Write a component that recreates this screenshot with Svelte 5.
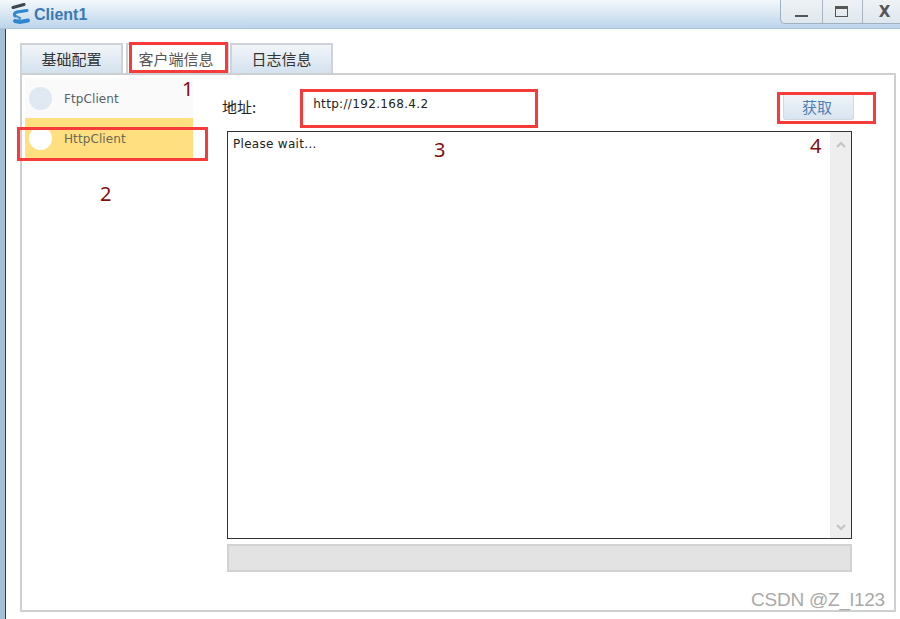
<script>
  const tabs = [
    { label: '基础配置', active: false },
    { label: '客户端信息', active: true },
    { label: '日志信息', active: false }
  ];
  const clients = [
    { name: 'FtpClient', active: false },
    { name: 'HttpClient', active: true }
  ];
  // red callouts drawn on top of the screenshot: [left, top, width, height]
  const callouts = [
    [129, 42, 99, 31],
    [17, 127, 191, 34],
    [300, 89, 238, 39],
    [777, 92, 99, 32]
  ];
  const marks = [
    ['1', 182, 77],
    ['2', 100, 182],
    ['3', 434, 138],
    ['4', 810, 134]
  ];
</script>

<div class="window">
  <header class="titlebar">
    <svg class="logo" width="20" height="24" viewBox="0 0 20 24">
      <path d="M2 4.5 L13 1.5" stroke="#3c4650" stroke-width="3" stroke-linecap="round" />
      <path d="M16 7.5 L6 9 Q2 10.5 4 13" fill="none" stroke="#2f86d0" stroke-width="3" stroke-linecap="round" />
      <path d="M4 18 L9 19 L17 17.5" fill="none" stroke="#2f86d0" stroke-width="4" stroke-linecap="round" />
      <path d="M5 13 L9 15 L8 18" fill="none" stroke="#4a90c8" stroke-width="2" />
    </svg>
    <span class="title">Client1</span>
    <div class="controls">
      <button class="ctl"><span class="min"></span></button>
      <button class="ctl"><span class="max"></span></button>
      <button class="ctl close">X</button>
    </div>
  </header>

  <div class="body">
    <nav class="tabs">
      {#each tabs as tab}
        <div class="tab" class:active={tab.active}>{tab.label}</div>
      {/each}
    </nav>

    <section class="panel">
      <aside class="sidebar">
        {#each clients as client}
          <div class="client" class:active={client.active}>
            <span class="dot"></span>
            <span class="name">{client.name}</span>
          </div>
        {/each}
      </aside>

      <div class="main">
        <div class="toolbar">
          <span class="label">地址:</span>
          <span class="url">http://192.168.4.2</span>
          <button class="fetch">获取</button>
        </div>
        <div class="output">
          <div class="log">Please wait...</div>
          <div class="scroll">
            <svg width="12" height="8" viewBox="0 0 12 8"><path d="M2 6 L6 2 L10 6" fill="none" stroke="#c4c4c4" stroke-width="2" /></svg>
            <svg width="12" height="8" viewBox="0 0 12 8"><path d="M2 2 L6 6 L10 2" fill="none" stroke="#c4c4c4" stroke-width="2" /></svg>
          </div>
        </div>
        <div class="progress"></div>
      </div>
    </section>
  </div>

  {#each callouts as c}
    <div class="callout" style="left:{c[0]}px;top:{c[1]}px;width:{c[2]}px;height:{c[3]}px"></div>
  {/each}
  {#each marks as m}
    <span class="mark" style="left:{m[1]}px;top:{m[2]}px">{m[0]}</span>
  {/each}
  <span class="watermark">CSDN @Z_l123</span>
</div>

<style>
  :global(body) {
    margin: 0;
    background: #fff;
  }

  .window {
    position: relative;
    width: 900px;
    height: 619px;
    overflow: hidden;
    display: flex;
    flex-direction: column;
    font-family: "DejaVu Sans", "Noto Sans CJK SC", sans-serif;
    font-size: 12px;
    color: #222;
    background: #a4c0d8;
  }

  .titlebar {
    height: 29px;
    flex: none;
    display: flex;
    align-items: flex-start;
    padding-left: 11px;
    box-sizing: border-box;
    background: linear-gradient(#f4f8fb, #bcd5ea);
    border-bottom: 1px solid #a9c3da;
  }

  .logo {
    margin-top: 3px;
  }

  .title {
    margin: 6px 0 0 3px;
    font: bold 16px "Liberation Sans", sans-serif;
    color: #3b78b5;
  }

  .controls {
    margin-left: auto;
    width: 120px;
    height: 24px;
    display: flex;
    box-sizing: border-box;
    border: 1px solid #9fb0be;
    border-top: none;
    border-right: none;
    border-bottom-left-radius: 5px;
    background: linear-gradient(#eef2f5, #dfe7ee);
  }

  .ctl {
    width: 40px;
    flex: none;
    padding: 0;
    border: none;
    border-left: 1px solid #a9b6c1;
    background: none;
    display: flex;
    align-items: center;
    justify-content: center;
  }

  .ctl:first-child {
    width: 41px;
    border-left: none;
  }

  .min {
    width: 13px;
    height: 2px;
    margin-top: 8px;
    background: #555;
  }

  .max {
    width: 11px;
    height: 7px;
    margin-right: 2px;
    border: 1.5px solid #555;
    border-top-width: 3px;
  }

  .close {
    padding-left: 4px;
    font: bold 15px "DejaVu Sans", sans-serif;
    color: #555;
  }

  .body {
    flex: 1;
    display: flex;
    flex-direction: column;
    box-sizing: border-box;
    margin-left: 5px;
    padding: 14px 4px 7px 14px;
    border-left: 1px solid #3a3a3a;
    background: #fff;
  }

  .tabs {
    display: flex;
    height: 31px;
    flex: none;
  }

  .tab {
    width: 103px;
    height: 31px;
    box-sizing: border-box;
    border: 2px solid #cdd3d8;
    border-bottom: none;
    background: linear-gradient(#f1f5f9, #d3e1ee);
    font: 15px "Noto Sans CJK SC", sans-serif;
    color: #333;
    text-align: center;
    line-height: 28px;
  }

  .tab.active {
    margin: 0 1px 0 3px;
    padding-right: 3px;
    background: #fff;
    color: #555;
  }

  .panel {
    flex: 1;
    display: flex;
    box-sizing: border-box;
    border: 2px solid #cdcfd1;
    margin-top: -1px;
    padding: 3px 0 0 3px;
    background: #fff;
    position: relative;
  }

  .sidebar {
    width: 168px;
    flex: none;
    font-size: 12px;
    color: #55616d;
  }

  .client {
    height: 40px;
    display: flex;
    align-items: center;
    gap: 12px;
    padding-left: 4px;
    background: #fafafa;
  }

  .name {
    margin-top: 1px;
    letter-spacing: 0.1px;
  }

  .client.active {
    background: #ffdf7f;
    color: #6b6a55;
  }

  .dot {
    width: 23px;
    height: 23px;
    border-radius: 50%;
    background: #e0e8f1;
  }

  .active .dot {
    background: #fff;
  }

  .main {
    width: 625px;
    margin-left: 34px;
    display: flex;
    flex-direction: column;
  }

  .toolbar {
    height: 53px;
    flex: none;
    display: flex;
    align-items: flex-start;
    position: relative;
  }

  .label {
    margin: 18px 0 0 -5px;
    font: 15px "Noto Sans CJK SC", sans-serif;
    color: #222;
  }

  .url {
    margin: 19px 0 0 57px;
    letter-spacing: 0.33px;
  }

  .fetch {
    position: absolute;
    left: 556px;
    top: 15px;
    width: 71px;
    height: 27px;
    padding: 0 3px 0 0;
    border: 1px solid #d3d8dc;
    border-top: none;
    border-radius: 0 0 3px 3px;
    background: linear-gradient(#f1f5f9, #d8e5f0);
    font: 15px "Noto Sans CJK SC", sans-serif;
    color: #4d7fb3;
  }

  .output {
    height: 408px;
    flex: none;
    display: flex;
    box-sizing: border-box;
    border: 1px solid #333;
    background: #fff;
  }

  .log {
    flex: 1;
    padding: 5px 5px;
    letter-spacing: 0.3px;
  }

  .scroll {
    width: 21px;
    flex: none;
    background: #eee;
    display: flex;
    flex-direction: column;
    justify-content: space-between;
    align-items: center;
    padding: 9px 0 7px;
    box-sizing: border-box;
  }

  .progress {
    height: 28px;
    flex: none;
    margin-top: 5px;
    box-sizing: border-box;
    border: 2px solid #d2d2d2;
    background: #e3e3e3;
  }

  .callout {
    position: absolute;
    box-sizing: border-box;
    border: 3px solid #f63b3b;
  }

  .mark {
    position: absolute;
    font: 20px "Noto Sans", sans-serif;
    line-height: 24px;
    color: #7f0f0f;
  }

  .watermark {
    position: absolute;
    right: 15px;
    top: 589px;
    font: 19px "Liberation Sans", sans-serif;
    letter-spacing: -0.2px;
    color: #a9a9a9;
  }
</style>
